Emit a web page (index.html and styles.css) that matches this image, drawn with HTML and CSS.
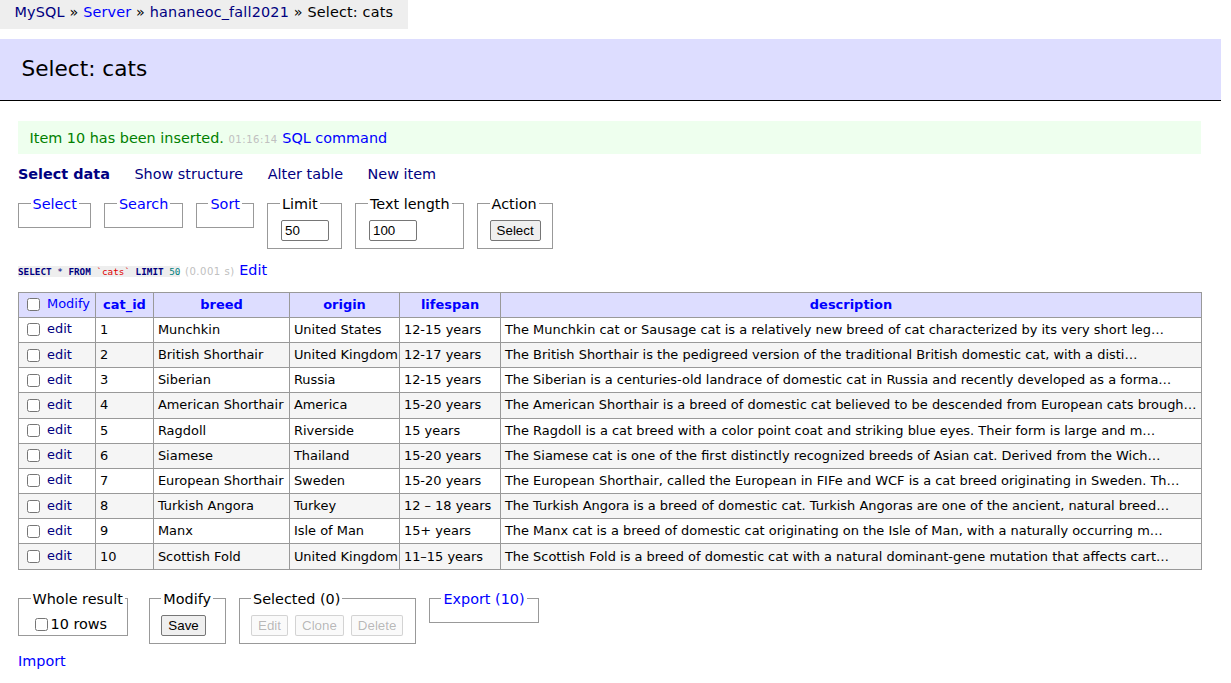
FILE: index.html
```html
<!DOCTYPE html>
<html lang="en">
<head>
<meta charset="utf-8">
<title>Select: cats - Adminer</title>
<link rel="stylesheet" href="styles.css">
</head>
<body>
<div class="breadcrumb"><a href="#" class="visited">MySQL</a> » <a href="#">Server</a> » <a href="#" class="visited">hananeoc_fall2021</a> » Select: cats</div>
<div class="content">
  <h2 class="title">Select: cats</h2>
  <div class="message">Item 10 has been inserted. <span class="time">01:16:14</span> <a href="#">SQL command</a></div>
  <p class="links"><a href="#" class="visited active">Select data</a> <a href="#" class="visited">Show structure</a> <a href="#" class="visited">Alter table</a> <a href="#" class="visited">New item</a></p>
  <form class="search-form">
    <fieldset class="fs"><legend><a href="#">Select</a></legend></fieldset>
    <fieldset class="fs"><legend><a href="#">Search</a></legend></fieldset>
    <fieldset class="fs"><legend><a href="#">Sort</a></legend></fieldset>
    <fieldset class="fs"><legend>Limit</legend><input class="size" type="text" value="50"></fieldset>
    <fieldset class="fs"><legend>Text length</legend><input class="size" type="text" value="100"></fieldset>
    <fieldset class="fs"><legend>Action</legend><button type="button" class="btn">Select</button></fieldset>
  </form>
  <p class="sql"><code class="code"><span class="kw">SELECT</span> * <span class="kw">FROM</span> <span class="ident">`cats`</span> <span class="kw">LIMIT</span> <span class="num">50</span></code> <span class="time">(0.001 s)</span> <a href="#">Edit</a></p>
  <table class="grid">
    <colgroup>
      <col class="c-mod"><col class="c-id"><col class="c-breed"><col class="c-origin"><col class="c-life"><col class="c-desc">
    </colgroup>
    <thead>
      <tr><td class="first"><input type="checkbox" class="cb"> <a href="#">Modify</a></td><th><a href="#">cat_id</a></th><th><a href="#">breed</a></th><th><a href="#">origin</a></th><th><a href="#">lifespan</a></th><th><a href="#">description</a></th></tr>
    </thead>
    <tbody>
      <tr><td class="first"><input type="checkbox" class="cb"> <a href="#" class="visited">edit</a></td><td>1</td><td>Munchkin</td><td>United States</td><td>12-15 years</td><td class="desc">The Munchkin cat or Sausage cat is a relatively new breed of cat characterized by its very short leg…</td></tr>
      <tr><td class="first"><input type="checkbox" class="cb"> <a href="#" class="visited">edit</a></td><td>2</td><td>British Shorthair</td><td>United Kingdom</td><td>12-17 years</td><td class="desc">The British Shorthair is the pedigreed version of the traditional British domestic cat, with a disti…</td></tr>
      <tr><td class="first"><input type="checkbox" class="cb"> <a href="#" class="visited">edit</a></td><td>3</td><td>Siberian</td><td>Russia</td><td>12-15 years</td><td class="desc">The Siberian is a centuries-old landrace of domestic cat in Russia and recently developed as a forma…</td></tr>
      <tr><td class="first"><input type="checkbox" class="cb"> <a href="#" class="visited">edit</a></td><td>4</td><td>American Shorthair</td><td>America</td><td>15-20 years</td><td class="desc">The American Shorthair is a breed of domestic cat believed to be descended from European cats brough…</td></tr>
      <tr><td class="first"><input type="checkbox" class="cb"> <a href="#" class="visited">edit</a></td><td>5</td><td>Ragdoll</td><td>Riverside</td><td>15 years</td><td class="desc">The Ragdoll is a cat breed with a color point coat and striking blue eyes. Their form is large and m…</td></tr>
      <tr><td class="first"><input type="checkbox" class="cb"> <a href="#" class="visited">edit</a></td><td>6</td><td>Siamese</td><td>Thailand</td><td>15-20 years</td><td class="desc">The Siamese cat is one of the first distinctly recognized breeds of Asian cat. Derived from the Wich…</td></tr>
      <tr><td class="first"><input type="checkbox" class="cb"> <a href="#" class="visited">edit</a></td><td>7</td><td>European Shorthair</td><td>Sweden</td><td>15-20 years</td><td class="desc">The European Shorthair, called the European in FIFe and WCF is a cat breed originating in Sweden. Th…</td></tr>
      <tr><td class="first"><input type="checkbox" class="cb"> <a href="#" class="visited">edit</a></td><td>8</td><td>Turkish Angora</td><td>Turkey</td><td>12 – 18 years</td><td class="desc">The Turkish Angora is a breed of domestic cat. Turkish Angoras are one of the ancient, natural breed…</td></tr>
      <tr><td class="first"><input type="checkbox" class="cb"> <a href="#" class="visited">edit</a></td><td>9</td><td>Manx</td><td>Isle of Man</td><td>15+ years</td><td class="desc">The Manx cat is a breed of domestic cat originating on the Isle of Man, with a naturally occurring m…</td></tr>
      <tr><td class="first"><input type="checkbox" class="cb"> <a href="#" class="visited">edit</a></td><td>10</td><td>Scottish Fold</td><td>United Kingdom</td><td>11–15 years</td><td class="desc">The Scottish Fold is a breed of domestic cat with a natural dominant-gene mutation that affects cart…</td></tr>
    </tbody>
  </table>
  <div class="footer">
    <fieldset class="fs fs-whole"><legend>Whole result</legend><label class="whole"><input type="checkbox" class="cb cb-all">10 rows</label></fieldset>
    <fieldset class="fs"><legend>Modify</legend><button type="button" class="btn">Save</button></fieldset>
    <fieldset class="fs"><legend>Selected (0)</legend><div class="btns"><button type="button" class="btn" disabled>Edit</button><button type="button" class="btn" disabled>Clone</button><button type="button" class="btn" disabled>Delete</button></div></fieldset>
    <fieldset class="fs"><legend><a href="#">Export (10)</a></legend></fieldset>
  </div>
  <p class="import"><a href="#">Import</a></p>
</div>
</body>
</html>
```
FILE: styles.css
```css
html, body {
  margin: 0;
  padding: 0;
}
body {
  color: #000;
  background: #fff;
  font-family: "DejaVu Sans", Verdana, sans-serif;
  font-size: 14.4px;
  line-height: 1.25;
}
a {
  color: #0000ff;
  text-decoration: none;
}
a.visited {
  color: #000080;
}
.breadcrumb {
  width: fit-content;
  white-space: nowrap;
  background: #eee;
  height: 28.8px;
  line-height: 25.9px;
  padding: 0 14.4px;
  letter-spacing: 0.17px;
}
.content {
  padding: 10px 10px 20px 18px;
}
.title {
  font-size: 21.6px;
  font-weight: normal;
  line-height: 1.25;
  margin: 0 0 20px -18px;
  padding: 17.28px 21.6px;
  border-bottom: 1px solid #000;
  background: #ddf;
  color: #000;
}
.message {
  color: #008000;
  background: #efe;
  padding: 7.2px 11.52px;
  margin: 0 20px 0 0;
}
.time {
  color: #c0c0c0;
  font-size: 10.08px;
  letter-spacing: 0.5px;
}
.links {
  margin: 11.52px 20px 0 0;
  white-space: nowrap;
}
.links a {
  margin-right: 20px;
}
.links .active {
  font-weight: bold;
}
.search-form {
  display: flex;
  align-items: flex-start;
  gap: 13px;
  margin: 11.5px 0 0 0;
}
.fs {
  margin: 0;
  padding: 7.2px 11.52px;
  border: 1px solid #999;
  min-width: 0;
}
.fs legend {
  padding: 0 2px;
  line-height: 18px;
}
.size {
  box-sizing: border-box;
  width: 48px;
  height: 21px;
  padding: 1px 3px;
  border: 1px solid #767676;
  border-radius: 2px;
  font-family: "Liberation Sans", Arial, sans-serif;
  font-size: 13.33px;
  display: block;
  margin: 0 1px;
}
.btn {
  box-sizing: border-box;
  height: 21px;
  padding: 1px 6px;
  font-family: "Liberation Sans", Arial, sans-serif;
  font-size: 13.33px;
  color: #000;
  background: #efefef;
  border: 1px solid #767676;
  border-radius: 2px;
  display: block;
}
.btn:disabled {
  color: rgba(16, 16, 16, 0.3);
  background: rgba(239, 239, 239, 0.3);
  border-color: rgba(118, 118, 118, 0.3);
}
.sql {
  margin: 11.5px 20px 0 0;
  white-space: nowrap;
}
.code {
  background: #eee;
  font-family: "DejaVu Sans Mono", "Liberation Mono", monospace;
  font-size: 9.3px;
  color: #000080;
}
.code .kw {
  font-weight: bold;
}
.code .ident {
  color: #e00000;
}
.code .num {
  color: #007f7f;
}
.grid {
  margin: 13px 20px 0 0;
  border-collapse: collapse;
  table-layout: fixed;
  width: 1183px;
  font-size: 12.96px;
}
.c-mod { width: 77px; }
.c-id { width: 58px; }
.c-breed { width: 136px; }
.c-origin { width: 110px; }
.c-life { width: 101px; }
.c-desc { width: 701px; }
.grid td, .grid th {
  border: 1px solid #999;
  padding: 2.6px 3.9px;
  height: 19px;
  white-space: nowrap;
  overflow: hidden;
  line-height: 16px;
  text-align: left;
}
.grid thead th {
  text-align: center;
  padding: 2.6px 6.5px;
}
.grid thead td, .grid thead th {
  background: #ddf;
}
.grid thead th a {
  font-weight: bold;
}
.grid tbody tr:nth-child(2n) {
  background: #f5f5f5;
}
.cb {
  width: 13px;
  height: 13px;
  margin: 3px 3px 3px 4px;
  vertical-align: middle;
}
.footer {
  display: flex;
  align-items: flex-start;
  gap: 13px;
  margin-top: 20px;
}
.fs.fs-whole {
  padding-right: 2px;
  margin-right: 8px;
}
.whole {
  display: block;
  height: 13px;
  line-height: 18px;
  white-space: nowrap;
  padding-left: 1px;
}
.cb-all {
  margin: 0 3px 0 3px;
  vertical-align: -2px;
}
.btns {
  display: flex;
  gap: 7px;
}
.import {
  margin: 8px 0 0 0;
}
```
